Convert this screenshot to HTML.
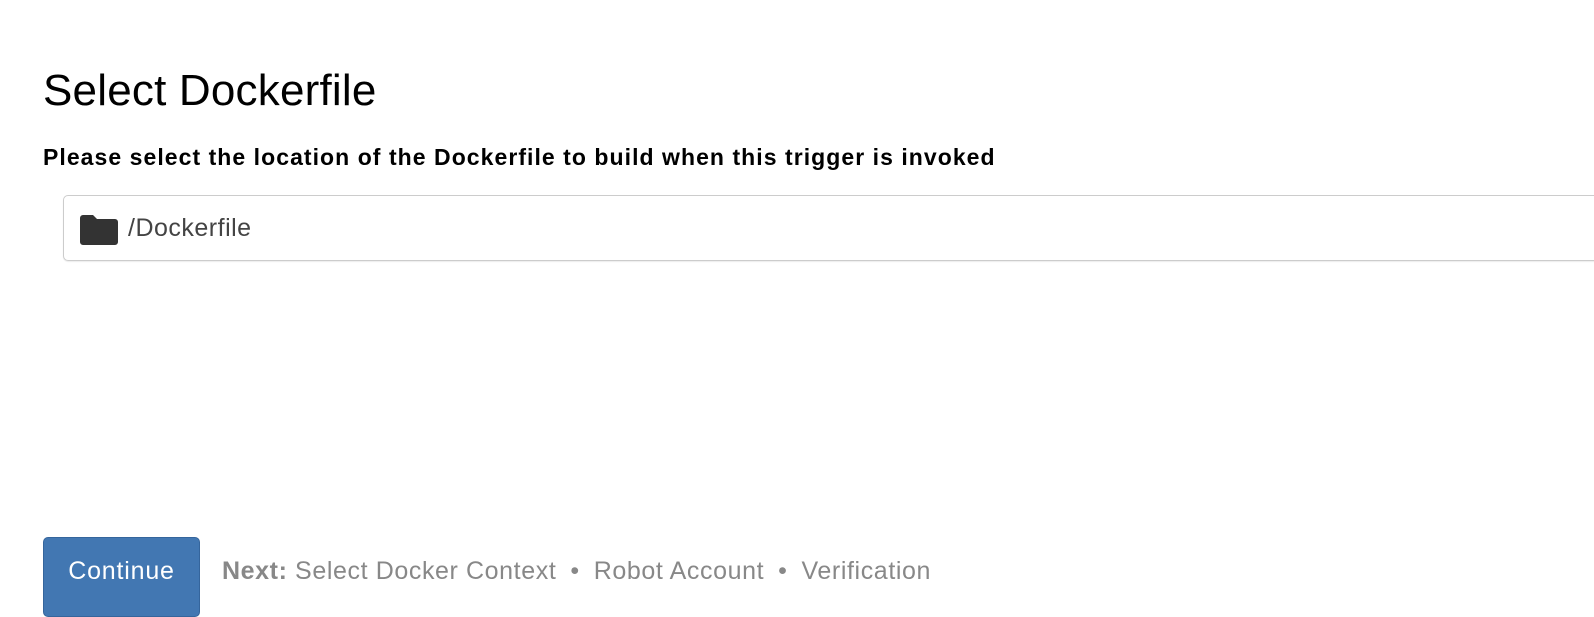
<!DOCTYPE html>
<html><head><style>
body{margin:0;width:1594px;height:610px;overflow:hidden;background:#fff;font-family:"Liberation Sans",sans-serif;position:relative}
h1{position:absolute;left:43px;top:66px;margin:0;font-weight:normal;font-size:44px;color:#000;letter-spacing:0.2px}
.sub{position:absolute;left:43px;top:144px;font-weight:bold;font-size:23px;color:#000;letter-spacing:1.05px}
.box{position:absolute;left:63px;top:195px;width:1560px;height:64px;border:1px solid #ccc;border-radius:5px;box-shadow:0 1px 1px rgba(0,0,0,.08)}
.box svg{position:absolute;left:16px;top:19px}
.box span{position:absolute;left:64px;top:18px;font-size:25px;color:#444;letter-spacing:0.5px}
.btn{position:absolute;left:43px;top:537px;width:157px;height:80px;background:#4277b2;border:1px solid #35659c;border-radius:5px;color:#fff;font-size:25px;box-sizing:border-box;padding-top:19px;text-align:center;letter-spacing:0.8px}
.next{position:absolute;left:222px;top:557px;font-size:25px;color:#888;letter-spacing:0.6px}
.next b{color:#888}
.dot{margin:0 14px}
</style></head><body>
<h1>Select Dockerfile</h1>
<div class="sub">Please select the location of the Dockerfile to build when this trigger is invoked</div>
<div class="box"><svg width="38" height="30" viewBox="0 0 38 30"><path d="M3 0h10l4 4h18a3 3 0 0 1 3 3v20a3 3 0 0 1-3 3H3a3 3 0 0 1-3-3V3a3 3 0 0 1 3-3z" fill="#333"/></svg><span>/Dockerfile</span></div>
<div class="btn">Continue</div>
<div class="next"><b>Next:</b> Select Docker Context<span class="dot">•</span>Robot Account<span class="dot">•</span>Verification</div>
</body></html>
